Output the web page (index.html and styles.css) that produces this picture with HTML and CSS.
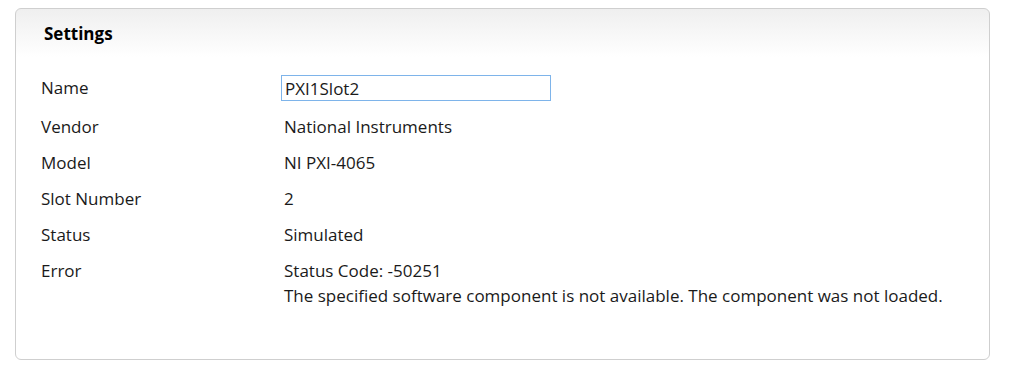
FILE: index.html
```html
<!DOCTYPE html>
<html lang="en">
<head>
    <meta charset="UTF-8">
    <title>Settings</title>
    <link rel="stylesheet" href="styles.css">
</head>
<body>
    <div class="panel">
        <div class="panel-header">Settings</div>
        <div class="panel-body">
            <div class="row row-input">
                <div class="label">Name</div>
                <div class="value"><input class="textbox" type="text" value="PXI1Slot2"></div>
            </div>
            <div class="row">
                <div class="label">Vendor</div>
                <div class="value">National Instruments</div>
            </div>
            <div class="row">
                <div class="label">Model</div>
                <div class="value">NI PXI-4065</div>
            </div>
            <div class="row">
                <div class="label">Slot Number</div>
                <div class="value">2</div>
            </div>
            <div class="row">
                <div class="label">Status</div>
                <div class="value">Simulated</div>
            </div>
            <div class="row">
                <div class="label">Error</div>
                <div class="value">Status Code: -50251<br>The specified software component is not available. The component was not loaded.</div>
            </div>
        </div>
    </div>
</body>
</html>
```

FILE: styles.css
```css
body {
    margin: 0;
    padding: 8px 26px 14px 15px;
    background-color: #fff;
    font-family: 'Open Sans', 'Noto Sans', sans-serif;
    font-size: 17px;
    color: #1a1a1a;
}
.panel {
    border: 1px solid #cfcfcf;
    border-radius: 6px;
    height: 352px;
    box-sizing: border-box;
    background: linear-gradient(to bottom, #efefef 0, #ffffff 48px);
}
.panel-header {
    padding: 13px 28px 0;
    height: 55px;
    box-sizing: border-box;
    font-weight: bold;
    font-size: 17px;
    color: #000;
}
.panel-body {
    padding: 11px 25px 0;
}
.row {
    display: grid;
    grid-template-columns: 243px 1fr;
    line-height: 25px;
    margin-bottom: 11px;
}
.row-input {
    margin-bottom: 13px;
}
.textbox {
    margin-left: -3px;
    width: 270px;
    height: 26px;
    box-sizing: border-box;
    border: 1px solid #7eb4ea;
    padding: 0 3px;
    font-family: inherit;
    font-size: 17px;
    color: #1a1a1a;
    outline: none;
}
```
